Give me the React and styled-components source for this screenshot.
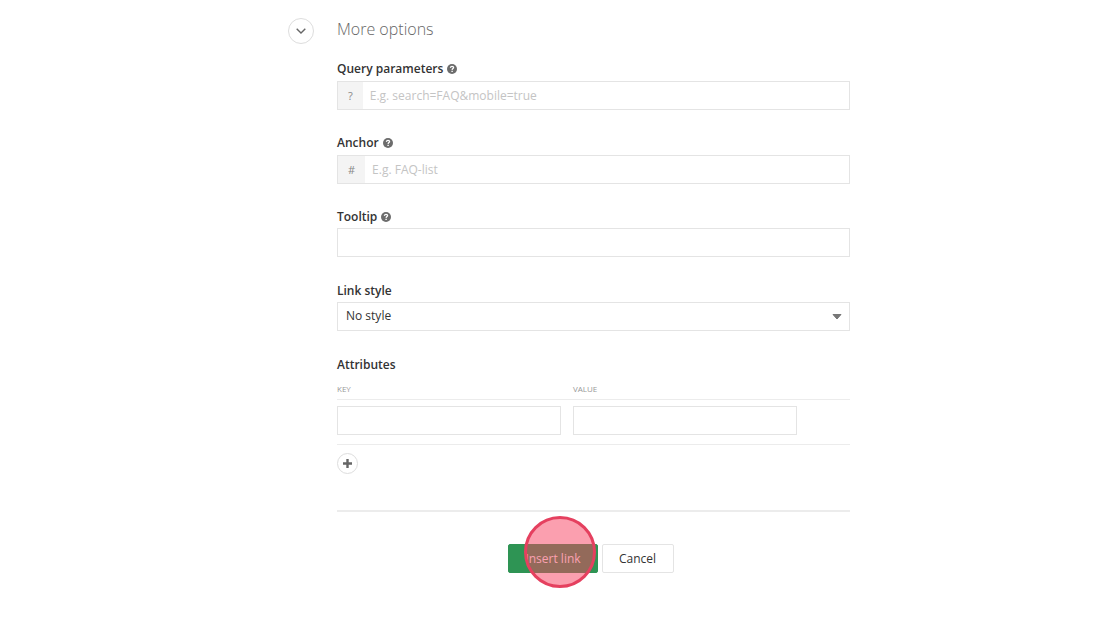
import { useState } from 'react'
import styled, { createGlobalStyle } from 'styled-components'

const GlobalStyle = createGlobalStyle`
  * {
    box-sizing: border-box;
  }

  body {
    margin: 0;
    background: #fff;
    color: #333;
    font-family: 'Open Sans', 'Noto Sans', sans-serif;
    font-size: 12px;
    line-height: 16px;
  }

  input,
  select,
  button {
    font: inherit;
    color: inherit;
  }
`

const Page = styled.main`
  max-width: 580px;
  margin: 0 auto;
  padding: 18px 0 40px 18px;
`

const Section = styled.section`
  display: flex;
  align-items: flex-start;
  gap: 23px;
`

const RoundButton = styled.button`
  display: flex;
  flex: none;
  align-items: center;
  justify-content: center;
  width: ${({ $size }) => $size}px;
  height: ${({ $size }) => $size}px;
  padding: 0;
  border: 1px solid #ddd;
  border-radius: 50%;
  background: #fff;
  color: #666;
  cursor: pointer;
`

const Form = styled.form`
  flex: 1;
  min-width: 0;
`

const Title = styled.h2`
  margin: 0 0 21px;
  color: #666;
  font-size: 16px;
  font-weight: 300;
  line-height: 22px;
`

const Field = styled.div`
  min-height: 49px;
  margin-bottom: 25px;
`

const LabelRow = styled.div`
  display: flex;
  align-items: center;
  gap: 4px;
  margin-bottom: 3px;
  font-weight: 600;
`

const InputGroup = styled.div`
  display: flex;
  margin-top: 4px;
  border: 1px solid #e4e4e4;
`

const Addon = styled.span`
  padding: 0 10px;
  background: #f4f4f4;
  color: #888;
  font-size: 11px;
  line-height: 27px;
`

const Input = styled.input`
  display: block;
  width: 100%;
  min-width: 0;
  height: ${({ $grouped }) => ($grouped ? 27 : 29)}px;
  padding: 0 7px;
  border: ${({ $grouped }) => ($grouped ? '0' : '1px solid #e4e4e4')};
  border-radius: 0;
  background: #fff;

  &::placeholder {
    color: #c4c4c4;
    opacity: 1;
  }
`

const SelectWrap = styled.div`
  position: relative;

  svg {
    position: absolute;
    top: 12px;
    right: 8px;
    pointer-events: none;
  }
`

const Select = styled.select`
  display: block;
  width: 100%;
  height: 29px;
  padding: 0 24px 2px 8px;
  border: 1px solid #e4e4e4;
  border-radius: 0;
  background: #fff;
  appearance: none;
`

const Fieldset = styled.fieldset`
  margin: 0 0 36px;
  padding: 0;
  border: 0;
`

const Legend = styled.legend`
  padding: 0;
  font-weight: 600;
`

const Table = styled.table`
  width: 100%;
  margin: 11px 0 8px;
  border-collapse: collapse;
  table-layout: fixed;
`

const HeadCell = styled.th`
  width: ${({ $width }) => $width};
  padding: 0 0 5px;
  border-bottom: 1px solid #ececec;
  color: #999;
  font-size: 8px;
  font-weight: 400;
  line-height: 10px;
  text-align: left;
`

const Cell = styled.td`
  padding: 6px 12px 9px 0;
  border-bottom: 1px solid #ececec;
`

const Divider = styled.hr`
  height: 2px;
  margin: 0 0 32px;
  border: 0;
  background: #ececec;
`

const Actions = styled.div`
  display: flex;
  justify-content: center;
  gap: 4px;
  padding-right: 5px;
`

const Button = styled.button`
  position: relative;
  min-width: 72px;
  height: 29px;
  padding: 1px 16px 0;
  border: 1px solid ${({ $primary }) => ($primary ? '#2e9454' : '#e4e4e4')};
  border-radius: 2px;
  background: ${({ $primary }) => ($primary ? '#2e9454' : '#fff')};
  color: ${({ $primary }) => ($primary ? '#fff' : '#333')};
  cursor: pointer;
`

const ClickMarker = styled.span`
  position: absolute;
  top: -29px;
  left: 15px;
  width: 72px;
  height: 72px;
  border: 3px solid #e5405f;
  border-radius: 50%;
  background: rgba(248, 64, 96, 0.5);
  pointer-events: none;
`

const HelpIcon = () => (
  <svg width='10' height='10' viewBox='0 0 10 10' fill='none'>
    <circle cx='5' cy='5' r='5' fill='#6c6c6c' />
    <path
      d='M3.3 3.7C3.6 2.7 4.300 2.3 5 2.3c.9 0 1.600.5 1.600 1.300C6.600 4.600 5.200 4.600 5.100 5.900'
      stroke='#fff'
      strokeWidth='1.3'
    />
    <path d='M4.400 6.700h1.400v1.400H4.400z' fill='#fff' />
  </svg>
)

const TextField = ({ id, label, prefix, placeholder }) => (
  <Field>
    <LabelRow>
      <label htmlFor={id}>{label}</label>
      <HelpIcon />
    </LabelRow>
    {prefix ? (
      <InputGroup>
        <Addon>{prefix}</Addon>
        <Input id={id} type='text' placeholder={placeholder} $grouped />
      </InputGroup>
    ) : (
      <Input id={id} type='text' />
    )}
  </Field>
)

const App = () => {
  const [is_opened, set_is_opened] = useState(true)
  const [rows, set_rows] = useState([0])

  return (
    <>
      <GlobalStyle />
      <Page>
        <Section>
          <RoundButton
            type='button'
            $size={26}
            aria-label='Toggle more options'
            aria-expanded={is_opened}
            onClick={() => set_is_opened(!is_opened)}
          >
            <svg width='10' height='6' viewBox='0 0 10 6' fill='none'>
              <path d='M0.7 0.8L5 5l4.3-4.2' stroke='currentColor' strokeWidth='1.4' />
            </svg>
          </RoundButton>
          <Form onSubmit={(e) => e.preventDefault()}>
            <Title>More options</Title>
            {is_opened && (
              <>
                <TextField
                  id='query'
                  label='Query parameters'
                  prefix='?'
                  placeholder='E.g. search=FAQ&mobile=true'
                />
                <TextField id='anchor' label='Anchor' prefix='#' placeholder='E.g. FAQ-list' />
                <TextField id='tooltip' label='Tooltip' />
                <Field>
                  <LabelRow>
                    <label htmlFor='style'>Link style</label>
                  </LabelRow>
                  <SelectWrap>
                    <Select id='style'>
                      <option>No style</option>
                    </Select>
                    <svg width='10' height='6' viewBox='0 0 10 6'>
                      <path d='M1 0.5h8L5 5z' fill='#777' stroke='#777' strokeLinejoin='round' />
                    </svg>
                  </SelectWrap>
                </Field>
                <Fieldset>
                  <Legend>Attributes</Legend>
                  <Table>
                    <thead>
                      <tr>
                        <HeadCell $width='46%'>KEY</HeadCell>
                        <HeadCell $width='46%'>VALUE</HeadCell>
                        <HeadCell $width='8%' />
                      </tr>
                    </thead>
                    <tbody>
                      {rows.map((row) => (
                        <tr key={row}>
                          <Cell>
                            <Input type='text' aria-label='Key' />
                          </Cell>
                          <Cell>
                            <Input type='text' aria-label='Value' />
                          </Cell>
                          <Cell />
                        </tr>
                      ))}
                    </tbody>
                  </Table>
                  <RoundButton
                    type='button'
                    $size={21}
                    aria-label='Add attribute'
                    onClick={() => set_rows([...rows, rows.length])}
                  >
                    <svg width='9' height='9' viewBox='0 0 9 9'>
                      <path d='M3.3 0h2.4v3.3H9v2.400H5.700V9H3.300V5.700H0V3.300h3.300z' fill='currentColor' />
                    </svg>
                  </RoundButton>
                </Fieldset>
              </>
            )}
            <Divider />
            <Actions>
              <Button type='submit' $primary>
                Insert link
                <ClickMarker />
              </Button>
              <Button type='button'>Cancel</Button>
            </Actions>
          </Form>
        </Section>
      </Page>
    </>
  )
}

export default App
